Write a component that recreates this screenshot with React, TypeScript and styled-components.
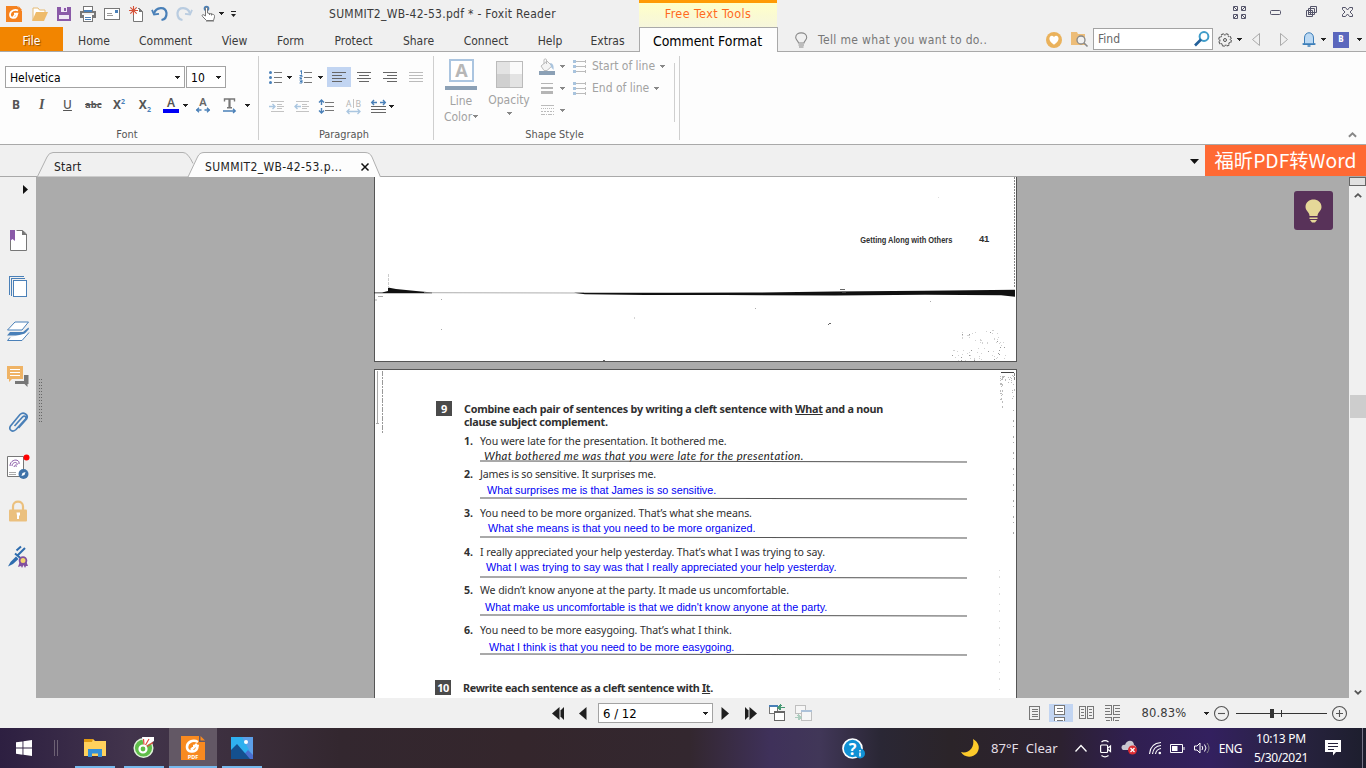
import React from 'react';
import styled, { createGlobalStyle, css } from 'styled-components';

const GlobalStyle = createGlobalStyle`
  * { box-sizing: border-box; }
  body { margin: 0; overflow: hidden; }
  svg { display: block; flex: none; overflow: visible; }
`;

const UI_FONT = `'DejaVu Sans Condensed', 'DejaVu Sans', 'Noto Sans CJK SC', sans-serif`;

const Window = styled.div`
  width: 1366px;
  height: 768px;
  display: flex;
  flex-direction: column;
  background: #f0f0f0;
  color: #3a3a3a;
  font: 12px/16px ${UI_FONT};
  font-stretch: condensed;
  white-space: nowrap;
  overflow: hidden;
`;

const Slot = styled.div<{ $w: number; $h?: number; $on?: boolean }>`
  width: ${p => p.$w}px;
  height: ${p => (p.$h ? `${p.$h}px` : '100%')};
  flex: none;
  display: flex;
  align-items: center;
  justify-content: center;
  ${p => p.$on && css`background: #c2d5f2;`}
`;

const Spaced = styled.span<{ $ls?: number; $size?: number }>`
  letter-spacing: ${p => p.$ls ?? 0}px;
  ${p => p.$size && css`font-size: ${p.$size}px;`}
`;

const Spacer = styled.div`
  flex: 1;
`;

/* ---------- title bar ---------- */
const TitleRow = styled.div`
  height: 27px;
  flex: none;
  display: flex;
`;
const QuickBar = styled.div`
  width: 329px;
  padding-left: 2px;
  display: flex;
`;
const Title = styled.div`
  width: 310px;
  line-height: 28px;
  letter-spacing: 0.28px;
`;
const ContextTab = styled.div`
  width: 138px;
  border-top: 3px solid #ff9b05;
  background: linear-gradient(#ffffc8, #f6f6dc);
  color: #ff6a1e;
  font-size: 12.5px;
  letter-spacing: 0.38px;
  line-height: 22px;
  text-align: center;
`;
const WindowButtons = styled.div`
  display: flex;
  padding: 0 1px 3px 0;
`;

/* ---------- menu row ---------- */
const MenuRow = styled.div`
  height: 25px;
  flex: none;
  display: flex;
  box-shadow: inset 0 -1px #a9a9a9;
`;
const FileTab = styled.div`
  width: 63px;
  height: 24px;
  background: #f28500;
  color: #fff;
  text-shadow: 1px 1px 1px #8a4b00;
  text-align: center;
  line-height: 28px;
`;
const MenuTab = styled.div<{ $w: number }>`
  width: ${p => p.$w}px;
  padding-left: 1px;
  text-align: center;
  line-height: 28px;
`;
const ActiveTab = styled.div`
  width: 139px;
  margin-left: 1px;
  padding-right: 2px;
  border: 1px solid #a9a9a9;
  border-bottom: 0;
  background: #fdfdfd;
  color: #000;
  font-size: 13.9px;
  line-height: 26px;
  text-align: center;
`;
const TellMe = styled.div`
  width: 228px;
  padding-left: 17px;
  display: flex;
  align-items: center;
  gap: 10px;
  color: #777;
  letter-spacing: 0.36px;
  padding-top: 1px;
`;
const FindBox = styled.div`
  width: 120px;
  height: 22px;
  margin-top: 1px;
  border: 1px solid #a3a3a3;
  background: #fff;
  display: flex;
  align-items: center;
  justify-content: space-between;
  padding: 0 2px 0 4px;
  color: #666;
`;
const Avatar = styled.div`
  width: 16px;
  height: 16px;
  background: #5b67bd;
  color: #fff;
  font-size: 8px;
  font-weight: 700;
  line-height: 16px;
  text-align: center;
`;

/* ---------- ribbon ---------- */
const Ribbon = styled.div`
  height: 93px;
  flex: none;
  display: flex;
  background: #fdfdfd;
  border-bottom: 1px solid #a9a9a9;
  padding: 4px 0;
`;
const Group = styled.div<{ $w: number }>`
  width: ${p => p.$w}px;
  border-right: 1px solid #cfcfcf;
  display: flex;
  flex-direction: column;
`;
const GroupLabel = styled.div`
  margin-top: auto;
  padding-right: 4px;
  height: 12px;
  line-height: 14px;
  font-size: 10.9px;
  color: #555;
  text-align: center;
`;
const ToolRow = styled.div<{ $pad: number; $h: number; $top?: number }>`
  display: flex;
  align-items: center;
  height: ${p => p.$h}px;
  margin-top: ${p => p.$top ?? 0}px;
  padding-left: ${p => p.$pad}px;
`;
const Combo = styled.div<{ $w: number; $pad: number }>`
  width: ${p => p.$w}px;
  height: 22px;
  margin-right: 1px;
  border: 1px solid #a3a3a3;
  background: #fff;
  color: #000;
  display: flex;
  align-items: center;
  justify-content: space-between;
  padding: 1px ${p => p.$pad}px 0 4px;
`;
const Glyph = styled.span<{ $size?: number; $face?: string; $weight?: number }>`
  font: ${p => p.$weight ?? 700} ${p => p.$size ?? 12}px/16px ${p => p.$face ?? `'Noto Sans', sans-serif`};
  color: #555;
  sup, sub { font-size: 7px; color: #4a80b8; line-height: 0; }
`;
const ItalicGlyph = styled(Glyph)`
  font-style: italic;
`;
const ShapeTools = styled.div`
  display: flex;
  flex: 1;
  color: #a2a2a2;
`;
const BigTool = styled.div<{ $w: number; $top: number; $gap?: number }>`
  width: ${p => p.$w}px;
  padding-top: ${p => p.$top}px;
  display: flex;
  flex-direction: column;
  align-items: center;
  gap: ${p => p.$gap ?? 0}px;
  line-height: 16px;
`;
const SmallTools = styled.div<{ $w: number; $pad?: number }>`
  width: ${p => p.$w}px;
  padding-left: ${p => p.$pad ?? 0}px;
  margin-top: -1px;
`;
const ShapeRow = styled.div<{ $h?: number; $gap?: number }>`
  height: ${p => p.$h ?? 22}px;
  gap: ${p => p.$gap ?? 0}px;
  display: flex;
  align-items: center;
`;
const Swatch = styled.div`
  width: 32px;
  height: 4px;
  margin: 4px 0 3px;
  background: #8ba0b5;
`;
const InnerRule = styled.div`
  width: 1px;
  height: 59px;
  margin-top: 7px;
  background: #cfcfcf;
`;
const Collapse = styled.div`
  margin: auto 9px 3px auto;
`;

/* ---------- document tabs ---------- */
const DocTabs = styled.div`
  height: 32px;
  flex: none;
  display: flex;
  align-items: flex-end;
  box-shadow: inset 0 -1px #a9a9a9;
`;
const DocTab = styled.div<{ $w: number; $ml: number }>`
  position: relative;
  width: ${p => p.$w}px;
  height: 25px;
  margin-left: ${p => p.$ml}px;
  padding: 4px 12px 0 17px;
  display: flex;
  align-items: center;
  justify-content: space-between;
`;
const TabShape = styled.svg`
  position: absolute;
  left: 0;
  top: 0;
`;
const TabText = styled.span<{ $ls: number }>`
  position: relative;
  color: #222;
  letter-spacing: ${p => p.$ls}px;
`;
const TabClose = styled.svg`
  position: relative;
`;
const Promo = styled.div`
  width: 161px;
  height: 31px;
  margin-bottom: 1px;
  background: #ff6933;
  color: #fff;
  font: 19.3px/31px 'Noto Sans CJK SC', sans-serif;
  text-align: center;
`;

/* ---------- workspace ---------- */
const Workspace = styled.div`
  height: 521px;
  flex: none;
  display: flex;
`;
const SideBar = styled.div`
  width: 36px;
  flex: none;
`;
const Expander = styled.div`
  height: 40px;
  padding: 8px 0 0 23px;
`;
const Canvas = styled.div`
  position: relative;
  flex: 1;
  background: #ababab;
  padding-left: 338px;
  overflow: hidden;
`;
const Grip = styled.div`
  position: absolute;
  left: 3px;
  top: 202px;
`;
const Hint = styled.div`
  position: absolute;
  right: 16px;
  top: 14px;
  width: 39px;
  height: 39px;
  border-radius: 3px;
  background: #583259;
  display: flex;
  align-items: center;
  justify-content: center;
`;
const Scroll = styled.div`
  width: 17px;
  display: flex;
  flex-direction: column;
  align-items: center;
`;
const SplitBox = styled.div`
  width: 17px;
  height: 9px;
  border: 1px solid #666;
  background: #e1e1e1;
`;
const Thumb = styled.div`
  width: 16px;
  height: 23px;
  background: #cdcdcd;
  margin: 193px 0 auto;
`;
const Sheet = styled.div<{ $h: number; $first?: boolean }>`
  position: relative;
  width: 643px;
  height: ${p => p.$h}px;
  background: #fff;
  border: 1px solid #555;
  ${p => p.$first ? css`border-top: 0; margin-bottom: 7px;` : css`border-bottom: 0;`}
  color: #303030;
  font: 10.6px/14px 'Noto Sans', 'Open Sans', sans-serif;
`;
const Marks = styled.svg`
  position: absolute;
  left: -1px;
  top: 0;
`;
const RunningFoot = styled.div`
  display: flex;
  justify-content: flex-end;
  gap: 27px;
  padding: 55px 27px 0 0;
  font: bold 9.5px/14px 'Liberation Sans', sans-serif;
`;
const Narrow = styled.span`
  padding-top: 1px;
  transform: scaleX(0.785);
  transform-origin: right;
`;
const Section = styled.div<{ $pt: number; $pl: number; $mb?: number }>`
  display: flex;
  gap: 12px;
  padding: ${p => p.$pt}px 0 0 ${p => p.$pl}px;
  margin-bottom: ${p => p.$mb ?? 0}px;
`;
const Badge = styled.div`
  width: 16px;
  height: 15px;
  background: #4a4a4a;
  color: #fff;
  font: bold 11px/15px 'Noto Sans', sans-serif;
  letter-spacing: -0.5px;
  text-align: center;
`;
const Heading = styled.div`
  font-weight: 700;
  font-size: 10.8px;
  line-height: 13px;
  padding-top: 1px;
  letter-spacing: -0.24px;
  u { text-underline-offset: 1px; }
`;
const Item = styled.div<{ $h: number }>`
  height: ${p => p.$h}px;
  display: flex;
  padding-left: 89px;
`;
const ItemNo = styled.div`
  width: 16px;
  font-weight: 700;
`;
const ItemBody = styled.div`
  width: 487px;
`;
const Question = styled.div<{ $ls: number }>`
  height: 14px;
  letter-spacing: ${p => p.$ls}px;
`;
const Answer = styled.div<{ $mt: number; $x: number; $hand?: boolean }>`
  height: 14px;
  margin-top: ${p => p.$mt}px;
  padding-left: ${p => p.$x}px;
  ${p => p.$hand
    ? css`font: italic 11.3px/13px Lato, sans-serif; letter-spacing: 0.42px; color: #222;`
    : css`font: 10.78px/15px 'Liberation Sans', Arial, sans-serif; color: #0000f5;`}
`;
const Rule = styled.div<{ $mt: number }>`
  height: 1px;
  margin-top: ${p => p.$mt}px;
  background: #555;
  transform: rotate(0.12deg);
`;

/* ---------- status bar ---------- */
const StatusBar = styled.div`
  height: 30px;
  flex: none;
  display: flex;
  align-items: center;
  padding-left: 546px;
`;
const PageBox = styled.div`
  width: 115px;
  height: 20px;
  border: 1px solid #a3a3a3;
  background: #fff;
  color: #000;
  display: flex;
  align-items: center;
  justify-content: space-between;
  padding: 1px 4px 0;
  font-size: 13px;
`;

/* ---------- taskbar ---------- */
const Taskbar = styled.div`
  height: 40px;
  flex: none;
  display: flex;
  color: #fff;
  font: 12px/19px 'Noto Sans', 'Open Sans', sans-serif;
  background: linear-gradient(90deg, #2d1f41 0, #42344c 130px, #3c2f3e 230px, #33272f 340px, #34262c 520px,
    #33272f 690px, #3f315a 770px, #413758 820px, #2a2735 880px, #2b2429 950px, #2c2130 1060px, #301f50 1130px,
    #33205f 1210px, #292342 1290px, #1d1e2d 1366px);
`;
const TaskButton = styled.div<{ $w: number; $ml: number; $on?: boolean }>`
  width: ${p => p.$w}px;
  margin-left: ${p => p.$ml}px;
  border-bottom: 2px solid #76b9ed;
  padding-top: 1px;
  display: flex;
  align-items: center;
  justify-content: center;
  ${p => p.$on && css`background: #635865;`}
`;
const Weather = styled.div`
  width: 83px;
  padding-left: 9px;
  font-size: 13.1px;
  line-height: 41px;
  word-spacing: 4px;
  color: #e4dfe6;
`;
const Clock = styled.div`
  width: 70px;
  padding-top: 1px;
  text-align: center;
`;
const DesktopEdge = styled.div`
  width: 4px;
  margin-left: auto;
  border-left: 1px solid #777487;
`;

/* ---------- icons ---------- */
const Down = ({ c = '#222' }: { c?: string }) => (
  <svg width="5" height="3" fill={c} shapeRendering="crispEdges"><path d="M0 0h5v1H0zM1 1h3v1H1zM2 2h1v1H2z" /></svg>
);
const Chevron = ({ up, c = '#555', s = 8 }: { up?: boolean; c?: string; s?: number }) => (
  <svg width={s} height={s * 0.6} viewBox="0 0 10 6" fill="none" stroke={c} strokeWidth="2.2">
    <path d={up ? 'M1 5.2 5 1.4l4 3.8' : 'M1 .8 5 4.6 9 .8'} />
  </svg>
);
const FoxitIcon = () => (
  <svg width="16" height="16"><path d="M0 0h11l5 5v11H0z" fill="#f5821f" /><path d="M12.5 0v4H16z" fill="#f5821f" />
    <path d="M12 4.6C9 2.8 4 4.8 4 8.8c0 3.6 4.8 4.2 6.6 1.4l.8-2.6H8M7 11l4-4" fill="none" stroke="#fff" strokeWidth="1.7" /></svg>
);
const OpenIcon = () => (
  <svg width="16" height="14"><path d="M1 13V1h5l1.5 2H13v3" fill="#fff" stroke="#e5bb74" /><path d="M0 14 4 5h12l-4 9z" fill="#eebb6b" /></svg>
);
const SaveIcon = () => (
  <svg width="14" height="14" shapeRendering="crispEdges"><path d="M0 0h14v14H0z" fill="#8a5aa8" /><path d="M4 0h6v5H4zM2 8h10v4H2z" fill="#f0e8f5" /><path d="M7 1h2v3H7z" fill="#8a5aa8" /></svg>
);
const PrintIcon = () => (
  <svg width="16" height="16" shapeRendering="crispEdges"><path d="M3.500 .5h9v4h-9z" fill="#fff" stroke="#777" /><path d="M0 5h16v7H0z" fill="#777" /><path d="M2 7h12v2H2z" fill="#f0f0f0" /><path d="M3 9h10v6H3z" fill="#fff" /><path d="M4 4h8v2H4z" fill="#4a80b8" /><path d="M5 11h6v1H5zM5 13h6v1H5z" fill="#4a80b8" /><path d="M3.500 9v6.500h9V9" fill="none" stroke="#777" /></svg>
);
const MailIcon = () => (
  <svg width="16" height="12" shapeRendering="crispEdges"><rect x=".5" y=".5" width="15" height="11" fill="#fff" stroke="#777" /><path d="M11 2h3v3h-3z" fill="#4a80b8" /><path d="M3 5h5v1H3zM3 7h6v1H3z" fill="#999" /></svg>
);
const NewIcon = () => (
  <svg width="15" height="16"><path d="M4.500 5v10.500h9V5.500l-3-3H9" fill="#fff" stroke="#777" /><path d="M10 2v4h4" fill="#777" />
    <path d="M4.500 0v9M0 4.500h9M1.300 1.300l6.400 6.400M7.700 1.300 1.300 7.700" stroke="#d5533a" strokeWidth="1.1" /></svg>
);
const UndoIcon = ({ flip }: { flip?: boolean }) => (
  <svg width="16" height="15" viewBox="0 0 16 15" fill="none" stroke={flip ? '#b9cce0' : '#4a80b8'} strokeWidth="2.200">
    <g transform={flip ? 'translate(16 0) scale(-1 1)' : undefined}>
      <path d="M2 7.500C4 1 13.500 0 14.500 7c.2 4-2 6.500-5 7" /><path d="M0 3.800 2 8.500l5-.6" strokeWidth="1.800" />
    </g>
  </svg>
);
const TouchIcon = () => (
  <svg width="15" height="17"><circle cx="5.500" cy="3.500" r="2.800" fill="#4a80b8" /><path d="M4.500 11V3.500c0-1.500 2-1.500 2 0V8l6 1.500c1.200.4 1 1.500 1 2.500l-1 3.500H5.500L2 12c-2-2 0-3 1-2z" fill="#fff" stroke="#777" /><path d="M5 16h8M8.500 8v2M10.500 8.500v2" stroke="#777" /></svg>
);
const BulbOutline = () => (
  <svg width="13" height="16" fill="none" stroke="#888" strokeWidth="1.100"><path d="M3.500 11C3.500 9 .7 8 .7 5.500c0-6.200 11-6.200 11 0C11.700 8 9 9 9 11zM3.500 13h5.500M4 15h4.500" /></svg>
);
const HeartIcon = () => (
  <svg width="16" height="16"><circle cx="8" cy="8" r="8" fill="#eab25c" /><path d="M8 12.800C1 8 3.500 3.500 6 3.700c1.200 0 2 1.300 2 1.300s.8-1.300 2-1.300c2.500-.2 5 4.300-2 9.100z" fill="#fff" /></svg>
);
const FolderSearch = () => (
  <svg width="17" height="15"><path d="M0 0h6l1 2h7v11H0z" fill="#edbd78" /><circle cx="10" cy="8" r="4" fill="#f0f0f0" stroke="#888" strokeWidth="1.300" /><path d="m13 11 3.500 3.500" stroke="#888" strokeWidth="1.600" /></svg>
);
const SearchIcon = () => (
  <svg width="16" height="16" fill="none"><circle cx="10" cy="5.500" r="4.400" stroke="#3f9cc9" strokeWidth="2" /><path d="m7 8.500-6 6" stroke="#23609a" strokeWidth="2.600" /></svg>
);
const GearIcon = () => (
  <svg width="14" height="14" fill="none" stroke="#555"><circle cx="7" cy="7" r="6.300" strokeDasharray="2.900 2.050" strokeWidth="1.100" /><circle cx="7" cy="7" r="5.200" strokeDasharray="1.900 2.184" strokeDashoffset="-2.300" strokeWidth="1.100" /><circle cx="7" cy="7" r="1.500" /></svg>
);
const NavTri = ({ right }: { right?: boolean }) => (
  <svg width="8" height="13" fill="none" stroke="#aaa"><path d={right ? 'M.5.5v12l7-6z' : 'M7.500.5v12l-7-6z'} /></svg>
);
const BellIcon = () => (
  <svg width="14" height="15"><path d="M2.500 11V6c0-7 9-7 9 0v5l1 1.500h-11z" fill="#bcd9f3" stroke="#3b7db8" /><path d="M.5 12h13M5.500 14h3" stroke="#3b7db8" strokeWidth="1.400" /></svg>
);
const ListIcon = ({ numbered }: { numbered?: boolean }) => (
  <svg width="13" height="14">
    {numbered
      ? <path d="M1 1.500 2.500.5v4M.5 5.500h2.500v1.500H1v1.500h2M.5 10h2.500v3H.5M1 11.500h2" fill="none" stroke="#4a80b8" />
      : <g fill="#4a80b8"><circle cx="1.500" cy="2.500" r="1.500" /><circle cx="1.500" cy="7.500" r="1.500" /><circle cx="1.500" cy="12.500" r="1.500" /></g>}
    <path d="M5 2h8v1H5zM5 7h8v1H5zM5 12h8v1H5z" fill="#777" />
  </svg>
);
const AlignIcon = ({ kind }: { kind: 'l' | 'c' | 'r' | 'j' }) => {
  const x = { l: 0, c: 2, r: 4, j: 0 }[kind];
  const w = kind === 'j' ? 14 : 10;
  return (
    <svg width="14" height="11" fill={kind === 'j' ? '#bbb' : '#666'} shapeRendering="crispEdges">
      {[0, 3, 6, 9].map((y, i) => <rect key={y} x={i % 2 ? x : 0} y={y} width={i % 2 ? w : 14} height="1" />)}
    </svg>
  );
};
const IndentIcon = ({ out }: { out?: boolean }) => (
  <svg width="15" height="11" fill="none" stroke="#c3c3c3" shapeRendering="crispEdges"><path d="M2 .5h13M8 3.500h5M8 5.500h7M8 7.500h5M2 10.500h13" />
    <path shapeRendering="auto" d={out ? 'M1 5.500h6M3.500 3 1 5.500 3.500 8' : 'M0 5.500h6M3.500 3 6 5.500 3.500 8'} stroke="#aac6e0" strokeWidth="1.400" /></svg>
);
const LineSpace = () => (
  <svg width="15" height="15" fill="none"><path d="M6 3.500h9M6 7.500h9M6 11.500h9" stroke="#777" shapeRendering="crispEdges" /><path d="M2.500 1v5M2.500 9v5M0 3.500 2.500 1 5 3.500M0 11.500 2.500 14 5 11.500" stroke="#4a80b8" strokeWidth="1.400" /></svg>
);
const CharSpace = () => (
  <svg width="15" height="15"><text x="0" y="8" fontSize="8.500" fill="#b5b5b5" fontFamily="Noto Sans">A</text><text x="9.500" y="8" fontSize="8.500" fill="#b5b5b5" fontFamily="Noto Sans">B</text><path d="M7.500 0v9" stroke="#c3c3c3" /><path d="M1 12.500h13M3.500 10 1 12.500 3.500 15M11.500 10l2.500 2.500-2.500 2.500" fill="none" stroke="#aac6e0" strokeWidth="1.300" /></svg>
);
const HScale = () => (
  <svg width="15" height="13" fill="none"><path d="M1 2.500h5M9 2.500h5M3 0 .7 2.500 3 5M12 0l2.300 2.500L12 5" stroke="#4a80b8" strokeWidth="1.400" /><path d="M0 6.500h15M0 9.500h15M0 12.500h15" stroke="#666" shapeRendering="crispEdges" /></svg>
);
const FontColor = () => (
  <svg width="16" height="16"><text x="8" y="10" textAnchor="middle" fontSize="12" fill="#555" fontFamily="Noto Sans" fontWeight="600">A</text><path d="M0 12h16v4H0z" fill="#0000f5" /></svg>
);
const FontWide = () => (
  <svg width="14" height="15"><text x="7" y="8" textAnchor="middle" fontSize="11" fill="#666" fontFamily="Noto Sans" fontWeight="600">A</text><path d="M0 12h5.500M8.500 12H14M3 9.700.7 12 3 14.300M11 9.700l2.300 2.300L11 14.300" fill="none" stroke="#4a80b8" strokeWidth="1.300" /></svg>
);
const FontText = () => (
  <svg width="14" height="15"><path d="M1.500 3.500V1h10v2.500M4 9.700h5" fill="none" stroke="#777" strokeWidth="1.400" /><path d="M6.500 1v9" stroke="#777" strokeWidth="2.200" /><path d="M0 13h12M10 10.700l2.300 2.300-2.300 2" fill="none" stroke="#4a80b8" strokeWidth="1.300" /></svg>
);
const LineColorIcon = () => (
  <svg width="25" height="23"><rect x="1" y="1" width="23" height="21" fill="#fff" stroke="#abc5e0" strokeWidth="2" /><text x="12.500" y="18" textAnchor="middle" fontSize="18" fontWeight="700" fill="#b7b7b7" fontFamily="Noto Sans">A</text></svg>
);
const OpacityIcon = () => (
  <svg width="27" height="27" shapeRendering="crispEdges"><path d="M0 0h27v27H0z" fill="#e3e3e3" /><path d="M14 1h12v12H14z" fill="#fafafa" /><path d="M1 13h13v13H1z" fill="#d0d0d0" /><path d="M.5.5h26v26H.5z" fill="none" stroke="#bbb" /></svg>
);
const BucketIcon = () => (
  <svg width="16" height="17"><path d="m2 8 6-5 5 5-5 4.500H5z" fill="#f4f4f4" stroke="#bbb" /><path d="M5 6V2c0-1.500 2.500-1.500 2.500 0v4" fill="none" stroke="#bbb" /><path d="M11 5c3 0 4 3 3.500 7L12 9z" fill="#a9c4de" /><path d="M0 13h16v4H0z" fill="#8ba0b5" /></svg>
);
const WeightIcon = () => (
  <svg width="12" height="11" fill="#b5b5b5" shapeRendering="crispEdges"><path d="M0 0h12v1H0zM0 4h12v2H0zM0 8h12v3H0z" /></svg>
);
const DashIcon = () => (
  <svg width="13" height="10" stroke="#bbb" shapeRendering="crispEdges"><path d="M0 .5h13" /><path d="M0 3.500h13" strokeDasharray="1 1" /><path d="M0 6.500h13" strokeDasharray="2 1" /><path d="M0 9.500h13" strokeDasharray="4 1 1 1" /></svg>
);
const EndsIcon = () => (
  <svg width="14" height="13" shapeRendering="crispEdges"><path d="M1 1.500h12M1 6.500h12M1 11.500h12" stroke="#bbb" /><path d="M0 0h3v3H0zM0 5h3v3H0zM0 10h3v3H0z" fill="#a9c4de" /><path d="M12 0h1v3h-1zM12 5h1v3h-1zM12 10h1v3h-1z" fill="#bbb" /></svg>
);
const Bookmark = () => (
  <svg width="24" height="24"><path d="M4.500 4v18.500h16V6l-4-3.500h-6" fill="#fff" stroke="#777" /><path d="M16 2v5h5" fill="#777" /><path d="M4 2h5v11l-2.500-2L4 13z" fill="#8a5aa8" /></svg>
);
const Pages = () => (
  <svg width="24" height="24" fill="none" stroke="#4a80b8" shapeRendering="crispEdges"><path d="M3.500 21V2.500H18M5.500 22V4.500H19" /><path d="M7.500 6.500h13v16h-13z" fill="#fff" /></svg>
);
const Layers = () => (
  <svg width="24" height="24"><path d="m1.500 10 7.500-8h13.500L16 10z" fill="#fff" stroke="#4a80b8" /><path d="M1 15.500 4 12h13l5.500-4.500L23 9l-6 6.500z" fill="#4a80b8" /><path d="M4 17.500 1.500 20.500H16l7-8" fill="#fff" stroke="#4a80b8" /></svg>
);
const Comments = () => (
  <svg width="24" height="24"><path d="M18 10h4.500v9h-1v3l-3-3H9v-3h9z" fill="#777" /><path d="M1 1h16v13H6l-3 3v-3H1z" fill="#efb365" /><path d="M4 4.500h10M4 7.500h10M4 10.500h10" stroke="#fff" /></svg>
);
const Clip = () => (
  <svg width="24" height="24" fill="none" stroke="#4a80b8" strokeWidth="1.700"><path d="m8.500 16 8-9c2-2 4.500 0 3 2L10 19.500c-3.500 3.500-8 0-5.500-3.500L14 4.500c3.500-3.500 9 .5 6.500 4.500l-8 9" /></svg>
);
const Sign = () => (
  <svg width="26" height="26"><path d="M2.500 2.500h16v20h-16z" fill="#fff" stroke="#777" /><path d="M5 12c0-7 10-8 9-2M7 12c0-4 6-5 5-1M9 13c1-3 3-2 2 0" fill="none" stroke="#8a5aa8" /><path d="M4 18.500h7M4 20.500h7" stroke="#aaa" /><circle cx="18.500" cy="20" r="5" fill="#3f72a8" /><path d="m16.500 22 1-3 3-1-1 3z" fill="#fff" /><circle cx="21.500" cy="3.500" r="3" fill="#f00" /></svg>
);
const Lock = () => (
  <svg width="24" height="24"><path d="M7 11V7.500c0-6.500 10-6.500 10 0V11" fill="none" stroke="#ebc07e" strokeWidth="2.200" /><rect x="3" y="10.500" width="18" height="12" rx="1" fill="#ebc07e" /><path d="M10.500 13.500h3.500v3h-1V20h-2v-3.500z" fill="#fff" /></svg>
);
const PenSeal = () => (
  <svg width="24" height="24"><path d="M2 21.500 4.500 17 10 11.500l2.500 2.500-5.500 5z" fill="#2d6cae" /><path d="m9 8.500 6 5M11 11l4-4M10.500 5.500l4.500-4M15 7l4-4" stroke="#2d6cae" strokeWidth="2" /><path d="m14 16-2 6 3-1 1 2 1.500-3 1.500 3 1-2h2l-2-5z" fill="#8250a0" /><circle cx="17" cy="15.500" r="3.400" fill="#f5d66b" stroke="#8250a0" strokeWidth="1.800" /></svg>
);
const HintBulb = () => (
  <svg width="17" height="24"><path d="M4.500 17C4.500 13 .5 12 .5 8 .5-2 16.500-2 16.500 8c0 4-4 5-4 9z" fill="#e5d898" /><path d="M4.500 18.500h8v1.500h-8zM5 21h7l-2 2.500H7z" fill="#e5d898" /></svg>
);
const PageTri = ({ dir, bar }: { dir: 'l' | 'r'; bar?: boolean }) => (
  <svg width={bar ? 12 : 8} height="13" fill="#1f1f1f">
    <g transform={dir === 'r' ? `translate(${bar ? 12 : 8} 0) scale(-1 1)` : undefined}>
      <path d="M7.500 0v13L0 6.500z" />{bar && <path d="M12 0v13L8.500 9.500v-6z" />}
    </g>
  </svg>
);
const ViewSwap = ({ dim }: { dim?: boolean }) => (
  <svg width="17" height="16" opacity={dim ? 0.4 : 1} shapeRendering="crispEdges">
    {dim
      ? <><path d="M.5.5h10v8H.5z" fill="#fff" stroke="#777" /><path d="M6.500 6.500h10v9h-10z" fill="#fff" stroke="#777" /><path d="M6 5h11v2H6z" fill="#4a80b8" /><path d="M0 12.500h6M3 10l2.500 2.500L3 15" fill="none" stroke="#479a75" strokeWidth="1.600" /></>
      : <><path d="M.5.5h8v8h-8z" fill="#fff" stroke="#777" /><path d="M0 0h9v2H0z" fill="#4a80b8" /><path d="M5.500 6.500h10v9h-10z" fill="#fff" stroke="#666" /><path d="M5 6h11v1.500H5z" fill="#666" /><path d="M9 2.500h7M12 0 9.500 2.500 12 5" fill="none" stroke="#479a75" strokeWidth="1.600" /></>}
  </svg>
);
const ViewIcon = ({ kind }: { kind: number }) => (
  <svg width="15" height="16" fill="none" stroke="#777" shapeRendering="crispEdges">
    {kind === 0 && <path d="M2.500 1.500h10v13h-10zM5 4.500h6M5 6.500h6M5 9.500h6M5 11.500h6" />}
    {kind === 1 && <><path fill="#fff" d="M.5.5h10v9H.5zM.5 16v-3.500h10V16" /><path d="M3 3.500h6M3 6.500h6M3 15.500h6" /></>}
    {kind === 2 && <path d="M.5 1.500h6v12h-6zM8.500 1.500h6v12h-6zM2 4.500h3M2 7.500h3M2 10.500h3M10 4.500h3M10 7.500h3M10 10.500h3" />}
    {kind === 3 && <path d="M0 .5h6.500v9H0M15 .5H8.500v9H15M0 12.500h6.500V16M15 12.500H8.500V16M0 3.500h5M0 6.500h5M10 3.500h5M10 6.500h5M1 15.500h4M10 15.500h4" />}
  </svg>
);
const ZoomKnob = ({ plus }: { plus?: boolean }) => (
  <svg width="15" height="15" fill="none" stroke="#555" strokeWidth="1.100"><circle cx="7.500" cy="7.500" r="7" /><path d={plus ? 'M4 7.500h7M7.500 4v7' : 'M4 7.500h7'} /></svg>
);

const menus: [string, number][] = [['Home', 61], ['Comment', 82], ['View', 56], ['Form', 56], ['Protect', 70], ['Share', 60], ['Connect', 75], ['Help', 53], ['Extras', 62]];

const items = [
  { h: 33, q: 'You were late for the presentation. It bothered me.', a: 'What bothered me was that you were late for the presentation.', x: 4, mt: 1, r: -2, hand: true, ls: -0.12 },
  { h: 39, q: 'James is so sensitive. It surprises me.', a: 'What surprises me is that James is so sensitive.', x: 7, mt: 2, r: 1, ls: -0.2 },
  { h: 39, q: 'You need to be more organized. That’s what she means.', a: 'What she means is that you need to be more organized.', x: 8, mt: 1, r: 2, ls: -0.11 },
  { h: 38, q: 'I really appreciated your help yesterday. That’s what I was trying to say.', a: 'What I was trying to say was that I really appreciated your help yesterday.', x: 6, mt: 1, r: 3, ls: -0.11 },
  { h: 40, q: 'We didn’t know anyone at the party. It made us uncomfortable.', a: "What make us uncomfortable is that we didn't know anyone at the party.", x: 5, mt: 3, r: 1, ls: -0.07 },
  { h: 57, q: 'You need to be more easygoing. That’s what I think.', a: 'What I think is that you need to be more easygoing.', x: 9, mt: 3, r: 0, ls: -0.1 },
];

/* scanner dust: a small deterministic scatter */
const scatter = (n: number, x0: number, y0: number, w: number, h: number, seed: number) => {
  let s = seed;
  const next = () => (s = (s * 16807) % 2147483647) / 2147483647;
  return Array.from({ length: n }, () => [Math.floor(x0 + next() * w), Math.floor(y0 + next() * h)]);
};
const specks = [...scatter(50, 596, 153, 36, 30, 4711), ...scatter(22, 578, 173, 26, 11, 977), ...scatter(10, 588, 154, 10, 8, 313)];
const edgeSpecks = [...scatter(20, 626, 5, 14, 8, 811), ...scatter(32, 626, 6, 3, 32, 557), ...scatter(9, 637, 10, 4, 24, 99)];

export default function App() {
  return (
    <Window>
      <GlobalStyle />
      <TitleRow>
        <QuickBar>
          <Slot $w={24}><FoxitIcon /></Slot>
          <Slot $w={28}><OpenIcon /></Slot>
          <Slot $w={20}><SaveIcon /></Slot>
          <Slot $w={28}><PrintIcon /></Slot>
          <Slot $w={20}><MailIcon /></Slot>
          <Slot $w={28}><NewIcon /></Slot>
          <Slot $w={20}><UndoIcon /></Slot>
          <Slot $w={28}><UndoIcon flip /></Slot>
          <Slot $w={20}><TouchIcon /></Slot>
          <Slot $w={6}><Down /></Slot>
          <Slot $w={18}><svg width="5" height="6" fill="#222"><path d="M0 0h5v1H0zM0 3h5L2.500 6z" /></svg></Slot>
        </QuickBar>
        <Title>SUMMIT2_WB-42-53.pdf * - Foxit Reader</Title>
        <ContextTab>Free Text Tools</ContextTab>
        <Spacer />
        <WindowButtons>
          <Slot $w={36}><svg width="13" height="13" fill="none" stroke="#55556a"><path d="M.5.5h4v4h-4zM8.500.5h4v4h-4zM.5 8.500h4v4h-4zM8.500 8.500h4v4h-4zM1 1l3 3M12 1 9 4M1 12l3-3M12 12 9 9" /></svg></Slot>
          <Slot $w={36}><svg width="11" height="5" fill="none" stroke="#55556a"><rect x=".5" y=".5" width="10" height="4" rx="1" /></svg></Slot>
          <Slot $w={36}><svg width="11" height="12" fill="#f0f0f0" stroke="#55556a"><path d="M4.500.5h6v6h-6zM2.500 2.500h6v6h-6zM.5 4.500h6v6h-6zM2.500 6.500h2v2h-2z" /></svg></Slot>
          <Slot $w={36}><svg width="11" height="10" fill="none" stroke="#55556a"><path d="M.5.5h3l2 2.500 2-2.500h3v2L8 5l2.500 2.500v2h-3L5.500 7l-2 2.500h-3v-2L3 5 .5 2.500z" /></svg></Slot>
        </WindowButtons>
      </TitleRow>

      <MenuRow>
        <FileTab>File</FileTab>
        {menus.map(([label, w]) => <MenuTab key={label} $w={w}>{label}</MenuTab>)}
        <ActiveTab>Comment Format</ActiveTab>
        <TellMe><BulbOutline /><span>Tell me what you want to do..</span></TellMe>
        <Spacer />
        <Slot $w={24}><HeartIcon /></Slot>
        <Slot $w={27}><FolderSearch /></Slot>
        <FindBox><span>Find</span><SearchIcon /></FindBox>
        <Slot $w={24}><GearIcon /></Slot>
        <Slot $w={5}><Down /></Slot>
        <Slot $w={28}><NavTri /></Slot>
        <Slot $w={28}><NavTri right /></Slot>
        <Slot $w={22}><BellIcon /></Slot>
        <Slot $w={7}><Down /></Slot>
        <Slot $w={28}><Avatar>B</Avatar></Slot>
        <Slot $w={9}><Down /></Slot>
        <Slot $w={2} />
      </MenuRow>

      <Ribbon>
        <Group $w={259}>
          <ToolRow $pad={5} $h={22} $top={10}>
            <Combo $w={180} $pad={4}><span>Helvetica</span><Down /></Combo>
            <Combo $w={40} $pad={4}><Spaced $ls={0.2}>10</Spaced><Down /></Combo>
          </ToolRow>
          <ToolRow $pad={3} $h={26} $top={4}>
            <Slot $w={25.8}><Glyph>B</Glyph></Slot>
            <Slot $w={25.8}><ItalicGlyph as="i" $face="'Liberation Serif', serif" $size={14}>I</ItalicGlyph></Slot>
            <Slot $w={25.8}><Glyph as="u" $weight={500}>U</Glyph></Slot>
            <Slot $w={25.8}><Glyph as="s" $size={9.5}>abc</Glyph></Slot>
            <Slot $w={25.8}><Glyph>X<sup>2</sup></Glyph></Slot>
            <Slot $w={25.8}><Glyph>X<sub>2</sub></Glyph></Slot>
            <Slot $w={25.8}><FontColor /></Slot>
            <Slot $w={4}><Down /></Slot>
            <Slot $w={30}><FontWide /></Slot>
            <Slot $w={24}><FontText /></Slot>
            <Slot $w={12}><Down /></Slot>
          </ToolRow>
          <GroupLabel>Font</GroupLabel>
        </Group>
        <Group $w={175}>
          <ToolRow $pad={8} $h={22} $top={10}>
            <Slot $w={17}><ListIcon /></Slot>
            <Slot $w={10}><Down /></Slot>
            <Slot $w={22}><ListIcon numbered /></Slot>
            <Slot $w={9}><Down /></Slot>
            <Slot $w={2} />
            <Slot $w={24} $h={20} $on><AlignIcon kind="l" /></Slot>
            <Slot $w={26}><AlignIcon kind="c" /></Slot>
            <Slot $w={26}><AlignIcon kind="r" /></Slot>
            <Slot $w={26}><AlignIcon kind="j" /></Slot>
          </ToolRow>
          <ToolRow $pad={4} $h={26} $top={5}>
            <Slot $w={26}><IndentIcon /></Slot>
            <Slot $w={24}><IndentIcon out /></Slot>
            <Slot $w={26}><LineSpace /></Slot>
            <Slot $w={28}><CharSpace /></Slot>
            <Slot $w={22}><HScale /></Slot>
            <Slot $w={5}><Down /></Slot>
          </ToolRow>
          <GroupLabel>Paragraph</GroupLabel>
        </Group>
        <Group $w={246}>
          <ShapeTools>
            <BigTool $w={54} $top={3}>
              <LineColorIcon />
              <Swatch />
              <span>Line</span>
              <ShapeRow $h={15} $gap={1}>Color<Down c="#888" /></ShapeRow>
            </BigTool>
            <BigTool $w={42} $top={5} $gap={4}>
              <OpacityIcon />
              <span>Opacity</span>
              <Down c="#888" />
            </BigTool>
            <SmallTools $w={43} $pad={4}>
              {[<BucketIcon key="b" />, <WeightIcon key="w" />, <DashIcon key="d" />].map((icon, i) => (
                <ShapeRow key={i}><Slot $w={26}>{icon}</Slot><Down c="#888" /></ShapeRow>
              ))}
            </SmallTools>
            <SmallTools $w={101}>
              {['Start of line', 'End of line'].map(label => (
                <ShapeRow key={label} $gap={5}><EndsIcon /><Spaced>{label}</Spaced><Down c="#888" /></ShapeRow>
              ))}
            </SmallTools>
            <InnerRule />
          </ShapeTools>
          <GroupLabel>Shape Style</GroupLabel>
        </Group>
        <Collapse><Chevron up c="#888" s={9} /></Collapse>
      </Ribbon>

      <DocTabs>
        <DocTab $w={156} $ml={37}>
          <TabShape width="156" height="25"><path d="M.5 24.500 10 5Q12 .5 16 .5h130q5 0 10 11v13" fill="#f0f0f0" /><path d="M.5 24.500 10 5Q12 .5 16 .5h130q5 0 10 11" fill="none" stroke="#b0b0b0" /></TabShape>
          <TabText $ls={0.2}>Start</TabText>
        </DocTab>
        <DocTab $w={193} $ml={-5}>
          <TabShape width="193" height="25"><path d="M0 25 9.500 5Q11.500 .5 16 .5h161q5 0 7 4.500L192.500 25" fill="#fdfdfd" stroke="#b0b0b0" /></TabShape>
          <TabText $ls={0.38}>SUMMIT2_WB-42-53.p...</TabText>
          <TabClose width="8" height="8" stroke="#111" strokeWidth="1.500"><path d="m.5.5 7 7M7.500.5l-7 7" /></TabClose>
        </DocTab>
        <Spacer />
        <Slot $w={21} $h={31}><svg width="9" height="5" fill="#111"><path d="M0 0h9L4.500 5z" /></svg></Slot>
        <Promo>福昕PDF转Word</Promo>
      </DocTabs>

      <Workspace>
        <SideBar>
          <Expander><svg width="5" height="9" fill="#111"><path d="M0 0v9l5-4.500z" /></svg></Expander>
          <Slot $w={36} $h={46}><Bookmark /></Slot>
          <Slot $w={36} $h={46}><Pages /></Slot>
          <Slot $w={36} $h={46}><Layers /></Slot>
          <Slot $w={36} $h={44}><Comments /></Slot>
          <Slot $w={36} $h={46}><Clip /></Slot>
          <Slot $w={36} $h={44}><Sign /></Slot>
          <Slot $w={36} $h={44}><Lock /></Slot>
          <Slot $w={36} $h={48}><PenSeal /></Slot>
        </SideBar>
        <Canvas>
          <Sheet $h={185} $first>
            <Marks width="643" height="184">
              <path d="M0 115.500h8l6-1.500v-3.500l8 1.500 20 2 16 1.500v.8H0z" fill="#111" />
              <path d="M50 115.700 210 116" stroke="#999" strokeWidth=".8" />
              <path d="M200 115.800h100l80-.2 80-1.100 90-.7 91-1v7l-14-1.500-76-.5-90 .8-110-.6-80 0-60-.8z" fill="#111" />
              <path d="M14.500 97v14" stroke="#ccc" strokeDasharray="3 1" />
              <path d="M640.500 0v111" stroke="#888" strokeDasharray="2 1" />
              <path d="M466 112.500h5M468 115h4M454 147.500h1M455 146.500h2M229 183.500h2" stroke="#666" />
              <path d="M381 131.500h1M67 152.500h1M556 124.500h1M260 141h1M1 123h2M67 122.500h1M4 119.500h5" stroke="#aaa" />
              <path d="M564 20.500h1" stroke="#ddd" />
              {specks.map(([x, y], i) => <rect key={i} x={x} y={y} width="1" height="1" fill={i % 5 ? '#d2d2d2' : '#999'} />)}
            </Marks>
            <RunningFoot><Narrow>Getting Along with Others</Narrow><Spaced $ls={-0.3}>41</Spaced></RunningFoot>
          </Sheet>
          <Sheet $h={330}>
            <Marks width="643" height="329">
              <path d="M3.500 1v52M2 53.500h3" stroke="#aaa" fill="none" />
              <path d="M8.500 1v62" stroke="#999" strokeDasharray="5 1 2 1" />
              <path d="M627 2.500h13" stroke="#444" /><path d="M640.500 3v8" stroke="#888" strokeDasharray="3 1" />
              {edgeSpecks.map(([x, y], i) => <rect key={i} x={x} y={y} width="1" height="1" fill="#bbb" />)}
              <path d="M639.500 40v125" stroke="#aaa" strokeDasharray="1 9 2 4" />
              <path d="M625.500 200v120" stroke="#ddd" strokeDasharray="1 5 2 9" />
            </Marks>
            <Section $pt={31} $pl={61} $mb={6}>
              <Badge>9</Badge>
              <Heading>
                Combine each pair of sentences by writing a cleft sentence with <u>What</u> and a noun<br />
                clause subject complement.
              </Heading>
            </Section>
            {items.map((it, i) => (
              <Item key={i} $h={it.h}>
                <ItemNo>{i + 1}.</ItemNo>
                <ItemBody>
                  <Question $ls={it.ls}>{it.q}</Question>
                  <Answer $mt={it.mt} $x={it.x} $hand={it.hand}>{it.a}</Answer>
                  <Rule $mt={it.r} />
                </ItemBody>
              </Item>
            ))}
            <Section $pt={0} $pl={60}>
              <Badge>10</Badge>
              <Heading><Spaced $ls={-0.33}>Rewrite each sentence as a cleft sentence with <u>It</u>.</Spaced></Heading>
            </Section>
          </Sheet>
          <Grip><svg width="3" height="44" stroke="#666" strokeDasharray="1 2" shapeRendering="crispEdges"><path d="M.5 0v44M2.500 0v44" /></svg></Grip>
          <Hint><HintBulb /></Hint>
        </Canvas>
        <Scroll>
          <SplitBox />
          <Slot $w={17} $h={18}><Chevron up /></Slot>
          <Thumb style={{ marginTop: 191 }} />
          <Slot $w={17} $h={12}><Chevron /></Slot>
        </Scroll>
      </Workspace>

      <StatusBar>
        <Slot $w={24}><PageTri dir="l" bar /></Slot>
        <Slot $w={26}><PageTri dir="l" /></Slot>
        <Slot $w={2} />
        <PageBox><span>6 / 12</span><Down /></PageBox>
        <Slot $w={24}><PageTri dir="r" /></Slot>
        <Slot $w={27}><PageTri dir="r" bar /></Slot>
        <Slot $w={27}><ViewSwap /></Slot>
        <Slot $w={24}><ViewSwap dim /></Slot>
        <Slot $w={207} />
        <Slot $w={24}><ViewIcon kind={0} /></Slot>
        <Slot $w={3} />
        <Slot $w={24} $h={18} $on><ViewIcon kind={1} /></Slot>
        <Slot $w={26}><ViewIcon kind={2} /></Slot>
        <Slot $w={26}><ViewIcon kind={3} /></Slot>
        <Slot $w={78}><Spaced $ls={0.15} $size={12.8}>80.83%</Spaced></Slot>
        <Slot $w={6}><Down /></Slot>
        <Slot $w={25}><ZoomKnob /></Slot>
        <Slot $w={1} />
        <Slot $w={92}><svg width="91" height="9" fill="#333" shapeRendering="crispEdges"><path d="M0 4h91v1H0zM34 0h4v9h-4zM45 1h1v7h-1z" /></svg></Slot>
        <Slot $w={25}><ZoomKnob plus /></Slot>
      </StatusBar>

      <Taskbar>
        <Slot $w={48}><svg width="16" height="16" fill="#fff"><path d="M0 2.300 6.500 1.400V7.600H0zM7.400 1.200 16 0v7.600H7.400zM0 8.500h6.500v6.200L0 13.800zM7.400 8.500H16V16l-8.600-1.200z" /></svg></Slot>
        <Slot $w={16}><svg width="4" height="16" stroke="#6d6174"><path d="M.5 0v16M3.500 0v16" /></svg></Slot>
        <TaskButton $w={40} $ml={11}>
          <svg width="22" height="18"><path d="M0 0h9l2 2h11v15H0z" fill="#ffd15c" /><path d="M0 0h9l-1 3H0z" fill="#e09a10" /><path d="M4 18v-8h14v8h-4v-3.500H8V18z" fill="#3390d9" /></svg>
        </TaskButton>
        <TaskButton $w={40} $ml={9}>
          <svg width="22" height="22"><circle cx="10.500" cy="11" r="9.300" fill="#5fbd49" stroke="#dff0da" strokeWidth="1.500" /><path d="M11 10 9 0h12v4z" fill="#fff" /><path d="m11 8-.5-6M12.500 8l3.500-6M14 9.500l6-4" stroke="#e2483d" strokeWidth="1.200" /><circle cx="10" cy="12" r="3.500" fill="#5fbd49" stroke="#fff" strokeWidth="2.200" /></svg>
        </TaskButton>
        <TaskButton $w={48} $ml={5} $on>
          <svg width="24" height="24"><path d="M0 0h18v6h6v18H0z" fill="#f88a20" /><path d="M19.500 0v4.500H24z" fill="#f88a20" /><path d="M17 6C12 3 6 6 6 11c0 5.500 8 6 10 1.500l.5-2.500H12M10 14l6-6" fill="none" stroke="#fff" strokeWidth="2.600" /><text x="12" y="22.500" textAnchor="middle" fontSize="5.500" fontWeight="700" fill="#fff" fontFamily="Noto Sans">PDF</text></svg>
        </TaskButton>
        <TaskButton $w={40} $ml={5}>
          <svg width="22" height="22"><path d="M0 0h22v22H0z" fill="#2fb0ef" /><path d="M11 0h11v20z" fill="#5c9fe8" /><path d="m9 22 8-9 5 5v4z" fill="#4a6fd0" /><path d="M0 13 6 7l13 15H0z" fill="#14508f" /><circle cx="15" cy="5" r="2" fill="#fff" /></svg>
        </TaskButton>
        <Slot $w={577} />
        <Slot $w={28}><svg width="22" height="21"><circle cx="10.500" cy="10.500" r="9.500" fill="#1091d5" stroke="#fff" strokeWidth="1.700" /><text x="10.500" y="16.500" textAnchor="middle" fontSize="16" fontWeight="700" fill="#fff" fontFamily="Noto Sans">?</text><circle cx="18" cy="15.500" r="5" fill="#1091d5" /><path d="M18 12v1.500M18 14.500v4" stroke="#fff" strokeWidth="1.500" /></svg></Slot>
        <Slot $w={91} />
        <Slot $w={24}><svg width="19" height="18"><path d="M12 0c5 3 8 8 4 14-4 5-13 5-16-1 7 2 14-4 12-13z" fill="#fcca2b" /></svg></Slot>
        <Weather>87°F Clear</Weather>
        <Slot $w={32}><svg width="12" height="7" fill="none" stroke="#fff" strokeWidth="1.300"><path d="m.5 6.500 5.500-6 5.500 6" /></svg></Slot>
        <Slot $w={17}><svg width="12" height="17" fill="none" stroke="#fff" strokeWidth="1.200"><rect x=".6" y="5" width="7" height="7.500" rx="1" /><path d="m8 8 2.500-2v5.500L8 9.500M1.500 2c2-1.500 5-1.500 7 0M1.500 15.500c2 1.500 5 1.500 7 0" /></svg></Slot>
        <Slot $w={31}><svg width="17" height="14"><path d="M2 9C-1 7 1 3 4 4c2-6 9-5 9 0 3 1 3 5 0 5z" fill="#c9c6d0" /><circle cx="11.500" cy="9" r="4.500" fill="#dc2b32" /><path d="m9.500 7 4 4M13.500 7l-4 4" stroke="#fff" strokeWidth="1.300" /></svg></Slot>
        <Slot $w={20}><svg width="13" height="13" fill="none" stroke="#fff" strokeWidth="1.100"><path d="M.5 12C1 5 5 1 12 .5M3.500 12C4 7 7 4 12 3.500M6.500 12c.5-3 2.500-5 5.500-5.500" /><circle cx="10.800" cy="11" r="1.300" fill="#fff" stroke="none" /></svg></Slot>
        <Slot $w={25}><svg width="15" height="9" fill="none" stroke="#fff"><path d="M.5.5h12v8H.5zM14 3v3" /><path d="M2 2h5.500v5H2z" fill="#fff" stroke="none" /></svg></Slot>
        <Slot $w={23}><svg width="16" height="12" fill="none" stroke="#fff"><path d="M.5 4v4H3l3 3V1L3 4z" /><path d="M8 4q1.500 2 0 4M10.500 2.500q3 3.500 0 7" /><path d="M13 1q4 5 0 10" stroke="#888" /></svg></Slot>
        <Slot $w={35}><Spaced $ls={-0.3}>ENG</Spaced></Slot>
        <Clock style={{ marginLeft: -2 }}><Spaced $ls={-0.25}>10:13 PM</Spaced><br /><Spaced $ls={-0.35}>5/30/2021</Spaced></Clock>
        <Slot $w={34}><svg width="16" height="16"><path d="M0 0h16v12h-5l-3 3.500V12H0z" fill="#fff" /><path d="M3 3.500h10M3 6.500h10M3 9.500h6" stroke="#25213a" /></svg></Slot>
        <DesktopEdge />
      </Taskbar>
    </Window>
  );
}
